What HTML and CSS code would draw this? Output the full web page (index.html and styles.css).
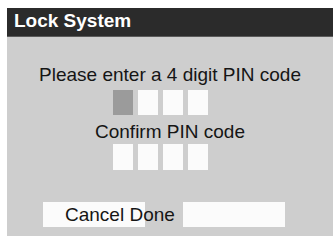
FILE: index.html
```html
<!DOCTYPE html>
<html lang="en">
<head>
  <meta charset="UTF-8">
  <title>Lock System</title>
  <link rel="stylesheet" href="styles.css">
</head>
<body>
  <div class="panel">
    <div class="title">Lock System</div>
    <div class="body">
      <div class="prompt">Please enter a 4 digit PIN code</div>
      <div class="pin">
        <span class="digit active"></span>
        <span class="digit"></span>
        <span class="digit"></span>
        <span class="digit"></span>
      </div>
      <div class="prompt confirm">Confirm PIN code</div>
      <div class="pin second">
        <span class="digit"></span>
        <span class="digit"></span>
        <span class="digit"></span>
        <span class="digit"></span>
      </div>
      <div class="actions">
        <div class="btn cancel">Cancel Done</div>
        <div class="btn blank"></div>
      </div>
    </div>
  </div>
</body>
</html>
```

FILE: styles.css
```css
body { margin: 0; background: #fff; font-family: "Liberation Sans", Arial, sans-serif; }
.panel { margin: 8px 2px 0 7px; height: 228px; display: flex; flex-direction: column; }
.title { background: #2b2b2b; color: #fff; font-weight: bold; font-size: 19px; height: 29px; line-height: 25px; padding-left: 7px; border-bottom: 1px solid #5a5a5a; box-sizing: border-box; }
.body { flex: 1; background: #cecece; display: flex; flex-direction: column; align-items: center; padding-top: 27px; color: #151515; }
.prompt { font-size: 19px; line-height: 22px; }
.confirm { margin-top: 6px; }
.pin { display: flex; gap: 5px; margin-top: 4px; margin-left: -19px; }
.pin.second { margin-top: 1px; }
.pin.second .digit { height: 26px; }
.digit { width: 20px; height: 25px; background: #fbfbfb; }
.digit.active { background: #9b9b9b; }
.actions { align-self: stretch; display: flex; margin-top: 32px; padding-left: 36px; gap: 38px; }
.btn { width: 102px; height: 25px; background: #fbfbfb; font-size: 19px; line-height: 25px; box-sizing: border-box; }
.cancel { padding-left: 22px; white-space: nowrap; position: relative; z-index: 0; }
```
